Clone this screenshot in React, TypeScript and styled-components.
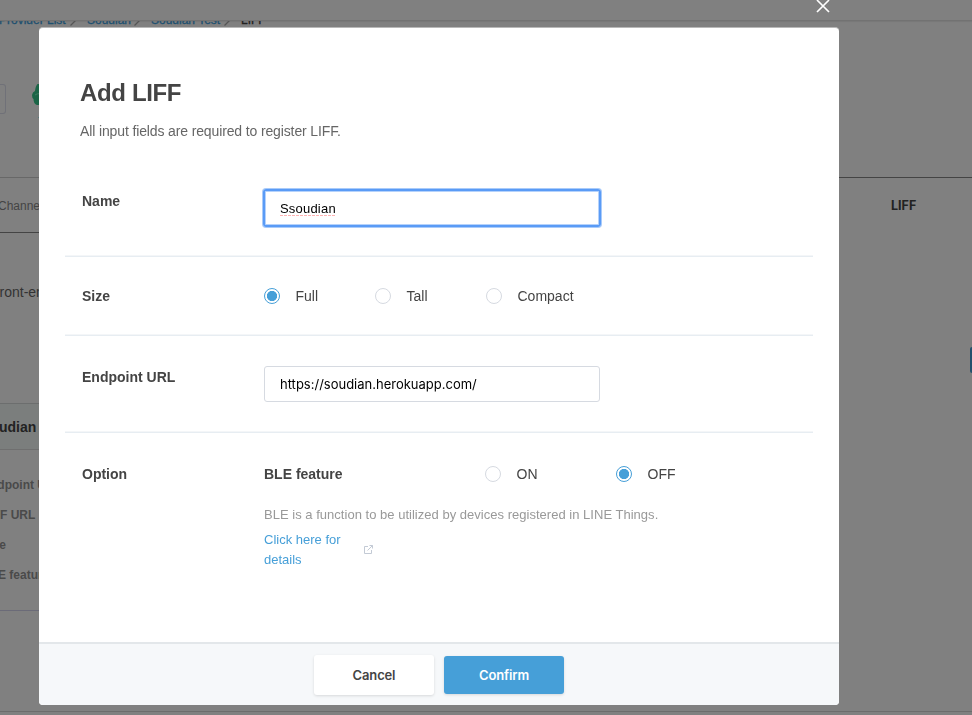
import React, { useState } from "react";
import styled, { createGlobalStyle, css } from "styled-components";

const Global = createGlobalStyle`
  *, *::before, *::after { box-sizing: border-box; }
  html, body { margin: 0; height: 100%; overflow: hidden; }
  body { font-family: "Liberation Sans", Arial, Helvetica, sans-serif; font-size: 14px; color: #444; }
  h2, p { margin: 0; }
`;

/* ---------- page behind the dialog ---------- */

const Page = styled.div`
  width: 972px;
  height: 715px;
  overflow: hidden;
  display: flex;
  flex-direction: column;
  background: #808080;
`;

const TopBar = styled.header`
  flex: none;
  height: 21px;
  border-bottom: 1px solid #727272;
  box-shadow: 0 1px 1px rgba(0, 0, 0, 0.06);
`;

const Breadcrumbs = styled.nav`
  flex: none;
  display: flex;
  align-items: flex-end;
  height: 6px;
  margin-left: -1px;
  overflow: hidden;
  font-size: 12px;
  line-height: 14px;
`;

const Crumb = styled.span<{ $width: number; $current?: boolean }>`
  width: ${(p) => p.$width}px;
  flex: none;
  margin-bottom: 0;
  white-space: nowrap;
  -webkit-text-stroke: 0.3px currentColor;
  color: ${(p) => (p.$current ? "#222" : "#1f506f")};
`;

const CrumbSlash = styled.svg`
  flex: none;
  width: 8px;
  height: 6px;
  margin-right: 9px;
`;

const Profile = styled.section`
  flex: none;
  display: flex;
  height: 150px;
  padding-top: 57px;
`;

const BackBox = styled.div`
  width: 6px;
  height: 30px;
  border: 1px solid #707178;
  border-left: 0;
  border-radius: 0 3px 3px 0;
`;

const Logo = styled.svg`
  width: 40px;
  height: 40px;
  margin-left: 25px;
`;

const Tabs = styled.div`
  flex: none;
  display: flex;
  height: 56px;
`;

const Tab = styled.div<{ $active?: boolean }>`
  display: flex;
  align-items: center;
  font-size: 12px;
  white-space: nowrap;
  ${(p) =>
    p.$active
      ? css`
          flex: 1;
          padding-left: 191px;
          border-top: 1px solid #444;
          color: #222;
          font-family: Inter, "Liberation Sans", sans-serif;
          font-size: 12.5px;
          font-weight: 700;
        `
      : css`
          width: 700px;
          padding-top: 1px;
          border-top: 1px solid #686868;
          border-bottom: 1px solid #444;
          color: #444;
          text-indent: -2px;
        `}
`;

const Intro = styled.p`
  flex: none;
  height: 114px;
  padding-top: 51px;
  margin-left: -9px;
  font-size: 14px;
  line-height: 16px;
  color: #333;
`;

const ActionRow = styled.div`
  flex: none;
  display: flex;
  justify-content: flex-end;
  height: 56px;
`;

const ActionEdge = styled.div`
  width: 2px;
  height: 26px;
  border-radius: 3px 0 0 3px;
  background: #24506c;
`;

const Card = styled.section`
  flex: none;
  width: 700px;
  height: 208px;
  border-top: 1px solid #6c6e6e;
  border-bottom: 1px solid #6b6b78;
`;

const CardTitle = styled.div`
  height: 46px;
  border-bottom: 1px solid #6f6f6f;
  background: #7b7e7d;
  font-size: 14px;
  line-height: 46px;
  font-weight: 700;
  color: #222;
  text-indent: -19px;
`;

const CardRow = styled.div`
  height: 30px;
  font-size: 12px;
  line-height: 30px;
  font-weight: 700;
  color: #4a4a4a;
  text-indent: -18px;
  white-space: nowrap;

  &:nth-child(2) {
    margin-top: 20px;
  }
`;

const BottomRule = styled.div`
  height: 1px;
  flex: none;
  margin-top: auto;
  margin-bottom: 3px;
  background: #6c6c6c;
`;

/* ---------- dialog ---------- */

const Dialog = styled.section`
  position: fixed;
  left: 39px;
  top: 27px;
  width: 800px;
  height: 678px;
  display: flex;
  flex-direction: column;
  border-radius: 4px;
  border-top: 1px solid #b8b8b8;
  background: #fff;
  overflow: hidden;
`;

const CloseButton = styled.button`
  position: fixed;
  left: 815px;
  top: -2px;
  width: 16px;
  height: 16px;
  padding: 0;
  border: 0;
  background: none;

  svg {
    display: block;
  }
`;

const DialogHead = styled.header`
  padding: 49px 41px 0;
  height: 131px;
  flex: none;
`;

const Title = styled.h2`
  font-size: 24px;
  line-height: 32px;
  font-weight: 700;
  letter-spacing: -0.35px;
  color: #444;
`;

const Lead = styled.p`
  margin-top: 13px;
  font-size: 14px;
  line-height: 18px;
  letter-spacing: -0.13px;
  color: #666;
`;

const Fields = styled.div`
  width: 748px;
  margin-left: 26px;
  flex: 1;
`;

const Field = styled.div<{ $height: number }>`
  display: grid;
  grid-template-columns: 182px 1fr;
  height: ${(p) => p.$height}px;
  padding-left: 17px;

  &:not(:last-child) {
    border-bottom: 1px solid #e7edf2;
    box-shadow: inset 0 -1px #f4f6f8;
  }
`;

const FieldLabel = styled.div<{ $top: number }>`
  padding-top: ${(p) => p.$top}px;
  font-size: 14px;
  line-height: 20px;
  font-weight: 700;
  color: #444;
`;

const FieldBody = styled.div<{ $top: number }>`
  padding-top: ${(p) => p.$top}px;
`;

const TextInput = styled.input`
  display: block;
  width: 336px;
  height: 36px;
  padding: 0 15px 1px;
  border: 1px solid #d6dae1;
  border-radius: 3px;
  outline: none;
  font: 13px Inter, "Liberation Sans", sans-serif;
  color: #000;
  background: #fff;
`;

const FocusedText = styled.div`
  display: flex;
  align-items: center;
  width: 338px;
  height: 38px;
  margin: -1px;
  padding: 2px 0 0 15px;
  border: 2px solid #5a9bf6;
  border-radius: 3px;
  box-shadow: 0 0 0 1px #a9cbfa, inset 0 0 0 1px #b5d2fb;
  font-size: 13px;
  letter-spacing: 0.2px;
  line-height: 16px;
  color: #000;
  outline: none;
`;

const Misspelled = styled.span`
  background: repeating-linear-gradient(90deg, #ffb3b3 0 3px, transparent 3px 4px) 0 calc(100% - 1px) / 100% 1px
    no-repeat;
`;

const RadioRow = styled.div`
  display: flex;
  align-items: center;
  height: 20px;
`;

const RadioLabel = styled.label<{ $width: number }>`
  display: flex;
  align-items: center;
  gap: 15.5px;
  width: ${(p) => p.$width}px;
  font-size: 14px;
  line-height: 20px;
  color: #444;
`;

const Radio = styled.input`
  appearance: none;
  flex: none;
  width: 16px;
  height: 16px;
  margin: 0;
  border: 1px solid #d6dae1;
  border-radius: 50%;
  background: #fff;

  &:checked {
    border-color: #469fd8;
    background: radial-gradient(circle, #469fd8 4.8px, #fff 5.4px);
  }
`;

const OptionName = styled.div`
  width: 221px;
  font-size: 14px;
  font-weight: 700;
`;

const Note = styled.p`
  margin-top: 22px;
  font-size: 13px;
  line-height: 18px;
  letter-spacing: 0.02px;
  color: #999;
`;

const LinkRow = styled.div`
  display: flex;
  align-items: center;
  margin-top: 6px;
`;

const DetailLink = styled.a`
  width: 99px;
  padding-right: 18px;
  font-size: 13px;
  line-height: 20px;
  color: #469fd8;
`;

const ExternalIcon = styled.svg`
  width: 11px;
  height: 11px;
  margin-bottom: 2px;
  fill: none;
  stroke: #c3cad5;
`;

const DialogFoot = styled.footer`
  flex: none;
  display: flex;
  justify-content: center;
  align-items: center;
  gap: 10px;
  height: 63px;
  border-top: 2px solid #e3e7ea;
  background: #f6f8fa;
`;

const Button = styled.button<{ $primary?: boolean }>`
  width: 120px;
  height: ${(p) => (p.$primary ? 38 : 40)}px;
  padding: 1px 0 0;
  border: 0;
  border-radius: 3px;
  font: 600 13px Inter, "Liberation Sans", sans-serif;
  letter-spacing: -0.15px;
  color: ${(p) => (p.$primary ? "#fff" : "#444")};
  background: ${(p) => (p.$primary ? "#469fd8" : "#fff")};
  box-shadow: 0 1px 3px rgba(0, 0, 0, 0.13);
`;

const DETAILS = ["Endpoint URL", "LIFF URL", "Size", "BLE feature"];

const SIZES = [
  { name: "Full", width: 111 },
  { name: "Tall", width: 111 },
  { name: "Compact", width: 120 },
];

const Slash = () => (
  <CrumbSlash viewBox="0 0 8 6">
    <path d="M0.5 4.5 6 -1" stroke="#555" strokeWidth="1.3" fill="none" />
  </CrumbSlash>
);

function Background() {
  return (
    <Page>
      <TopBar />
      <Breadcrumbs>
        <Crumb $width={71}>Provider List</Crumb>
        <Slash />
        <Crumb $width={47}>Soudian</Crumb>
        <Slash />
        <Crumb $width={73}>Soudian Test</Crumb>
        <Slash />
        <Crumb $width={40} $current>LIFF</Crumb>
      </Breadcrumbs>
      <Profile>
        <BackBox />
        <Logo viewBox="0 0 40 40">
          <path d="M6.5 0H14V21H6Q2.500 20 2.500 15Q1 14 1 11Q1.500 8 4 7Q4.500 2 6.500 0Z" fill="#1b6547" />
          <path d="M4 11Q6 9.500 9 9.500" stroke="#3f7a60" strokeWidth="1" fill="none" />
          <path d="M7 34H12V31L9 32Z" fill="#2a7374" />
        </Logo>
      </Profile>
      <Tabs>
        <Tab>Channel settings</Tab>
        <Tab $active>LIFF</Tab>
      </Tabs>
      <Intro>Front-end</Intro>
      <ActionRow>
        <ActionEdge />
      </ActionRow>
      <Card>
        <CardTitle>Soudian</CardTitle>
        {DETAILS.map((name) => (
          <CardRow key={name}>{name}</CardRow>
        ))}
      </Card>
      <BottomRule />
    </Page>
  );
}

export default function App() {
  const [size, setSize] = useState("Full");
  const [ble, setBle] = useState("OFF");
  const [url, setUrl] = useState("https://soudian.herokuapp.com/");

  return (
    <>
      <Global />
      <Background />
      <CloseButton aria-label="Close">
        <svg width="16" height="16" viewBox="0 0 16 16">
          <path d="M2 2 14 14M14 2 2 14" stroke="#fff" strokeWidth="1.7" fill="none" />
        </svg>
      </CloseButton>
      <Dialog role="dialog">
        <DialogHead>
          <Title>Add LIFF</Title>
          <Lead>All input fields are required to register LIFF.</Lead>
        </DialogHead>
        <Fields>
          <Field $height={98}>
            <FieldLabel $top={32}>Name</FieldLabel>
            <FieldBody $top={31}>
              <FocusedText role="textbox" contentEditable suppressContentEditableWarning>
                <Misspelled>Ssoudian</Misspelled>
              </FocusedText>
            </FieldBody>
          </Field>
          <Field $height={79}>
            <FieldLabel $top={29}>Size</FieldLabel>
            <FieldBody $top={29}>
              <RadioRow>
                {SIZES.map((s) => (
                  <RadioLabel key={s.name} $width={s.width}>
                    <Radio type="radio" name="size" checked={size === s.name} onChange={() => setSize(s.name)} />
                    {s.name}
                  </RadioLabel>
                ))}
              </RadioRow>
            </FieldBody>
          </Field>
          <Field $height={97}>
            <FieldLabel $top={31}>Endpoint URL</FieldLabel>
            <FieldBody $top={30}>
              <TextInput value={url} onChange={(e) => setUrl(e.target.value)} />
            </FieldBody>
          </Field>
          <Field $height={200}>
            <FieldLabel $top={31}>Option</FieldLabel>
            <FieldBody $top={31}>
              <RadioRow>
                <OptionName>BLE feature</OptionName>
                {["ON", "OFF"].map((v) => (
                  <RadioLabel key={v} $width={131}>
                    <Radio type="radio" name="ble" checked={ble === v} onChange={() => setBle(v)} />
                    {v}
                  </RadioLabel>
                ))}
              </RadioRow>
              <Note>BLE is a function to be utilized by devices registered in LINE Things.</Note>
              <LinkRow>
                <DetailLink>Click here for details</DetailLink>
                <ExternalIcon viewBox="0 0 11 11">
                  <path d="M5 2.5H1.5V9.5H8.5V6M4.5 6.5 9.5 1.5M6.5 1.5H9.5V4.5" />
                </ExternalIcon>
              </LinkRow>
            </FieldBody>
          </Field>
        </Fields>
        <DialogFoot>
          <Button>Cancel</Button>
          <Button $primary>Confirm</Button>
        </DialogFoot>
      </Dialog>
    </>
  );
}
